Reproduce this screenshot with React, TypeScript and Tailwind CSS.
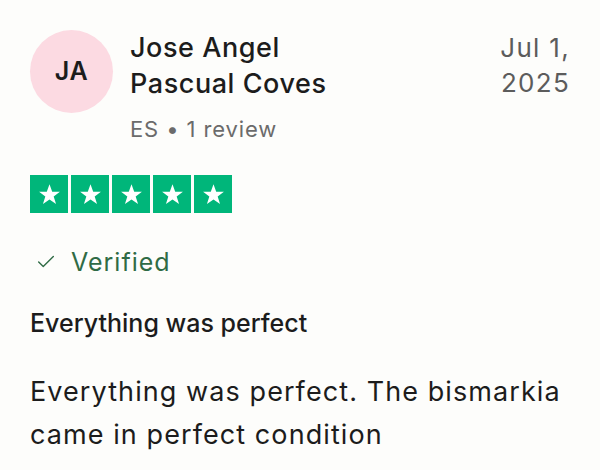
import { Check } from "lucide-react";

const Star = () => (
  <div className="flex h-[38px] w-[38px] items-center justify-center bg-[#00b67a]">
    <svg viewBox="0 0 24 24" className="h-[25px] w-[25px]" fill="#ffffff">
      <path d="M12 2.2l2.6 7.1h7.4l-6 4.5 2.3 7.4L12 16.7l-6.3 4.5L8 13.8 2 9.3h7.4z" />
    </svg>
  </div>
);

export default function App() {
  return (
    <main className="min-h-[470px] w-[600px] bg-[#fdfdfb] px-[30px] pt-[30px] font-['Inter',sans-serif] tracking-[0.035em] text-[#1c1c1c]">
      {/* cabecera: avatar, nombre y fecha */}
      <section className="flex items-start">
        <div className="flex h-[83px] w-[83px] shrink-0 items-center justify-center rounded-full bg-[#fcdae2] text-[25px] font-semibold text-[#1c1c1c]">
          JA
        </div>
        <div className="ml-[17px] flex-1">
          <h2 className="text-[27px] font-medium leading-[36px]">
            Jose Angel
            <br />
            Pascual Coves
          </h2>
          <p className="mt-[12px] text-[22px] leading-[30px] tracking-[0.04em] text-[#6b6b6b]">
            ES • 1 review
          </p>
        </div>
        <div className="text-right text-[26px] leading-[35px] tracking-[0.05em] text-[#5c5c5c]">
          Jul 1,
          <br />
          2025
        </div>
      </section>

      <section className="mt-[31px] flex gap-[3px]">
        <Star />
        <Star />
        <Star />
        <Star />
        <Star />
      </section>

      <section className="mt-[33px] flex items-center gap-[14px] text-[#2f6b45]">
        <Check className="ml-[5px] h-[22px] w-[22px]" strokeWidth={1.5} />
        <span className="text-[25px] leading-[32px] tracking-[0.04em]">Verified</span>
      </section>

      <h3 className="mt-[28px] text-[25px] font-medium leading-[34px] tracking-normal">
        Everything was perfect
      </h3>

      <p className="mt-[30px] w-[565px] text-[27px] leading-[43px] tracking-[0.04em]">
        Everything was perfect. The bismarkia came in perfect condition
      </p>
    </main>
  );
}
